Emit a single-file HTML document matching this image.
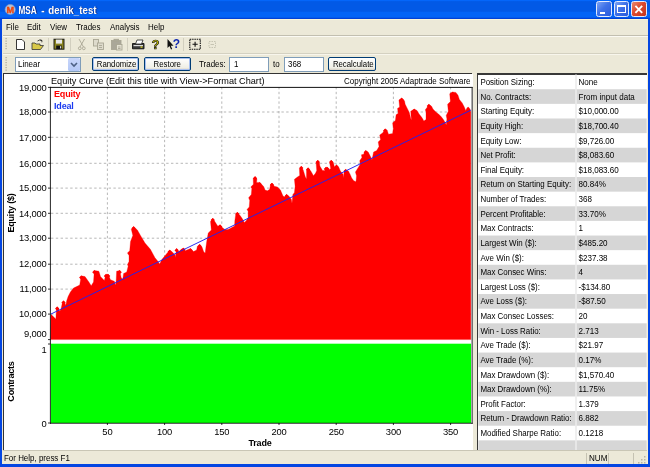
<!DOCTYPE html>
<html><head><meta charset="utf-8"><title>MSA - denik_test</title>
<style>
html,body{margin:0;padding:0;}
body{width:650px;height:467px;overflow:hidden;background:#ece9d8;font-family:"Liberation Sans",sans-serif;font-size:9.5px;color:#000;position:relative;will-change:transform;}
.abs{position:absolute;}
#title{left:0;top:0;width:650px;height:19.3px;background:linear-gradient(to bottom,#0466fa 0,#0466fa 0.8px,#0259e6 1.6px,#0259e6 11.3px,#0364f6 12.2px,#0364f6 17.2px,#0242d6 18.2px,#0242d6 19.3px);}
#title .t{position:absolute;left:18.3px;top:4.2px;color:#fff;font-weight:bold;font-size:10.2px;letter-spacing:-0.6px;word-spacing:2.2px;text-shadow:1px 1px 0 #0a2a8a;white-space:nowrap;}
.wb{position:absolute;top:1.2px;width:15.6px;height:16.3px;border-radius:2.5px;border:1px solid #e4ebfc;box-sizing:border-box;background:linear-gradient(135deg,#7ea4f4 0%,#3f72e8 45%,#2a5bdc 100%);}
#menu{left:2.5px;top:19.3px;width:645.5px;height:16.2px;background:#ece9d8;border-top:0.8px solid #fbf5d8;box-sizing:border-box;}
#menu span{position:absolute;top:2.2px;font-size:9.3px;white-space:nowrap;transform:scaleX(0.855);transform-origin:0 0;}
#tb1{left:2.5px;top:34.9px;width:645px;height:18.8px;background:linear-gradient(#c2bfb0 0,#c2bfb0 0.9px,#fbfaf3 0.9px,#fbfaf3 1.7px,#ece9d8 1.7px);}
#tb2{left:2.5px;top:53.4px;width:645px;height:19.6px;background:linear-gradient(#d4d1c1 0,#d4d1c1 0.9px,#f8f6ec 0.9px,#f8f6ec 1.7px,#ece9d8 1.7px);}
.lb,.rb,.bb{background:#0446e2;}
.btn{position:absolute;top:57px;height:14px;box-sizing:border-box;border:1px solid #003c74;border-radius:2px;background:linear-gradient(#fff,#f0efe6 80%,#d6d0c5);font-size:9.3px;text-align:center;line-height:12px;white-space:nowrap;}
.btn span{display:inline-block;transform:scaleX(0.84);transform-origin:50% 50%;}
.sx{display:inline-block;transform:scaleX(0.855);transform-origin:0 0;white-space:nowrap;}
.inp{position:absolute;top:56.5px;height:15px;box-sizing:border-box;border:1px solid #7f9db9;background:#fff;font-size:9.3px;line-height:13.4px;padding-left:3.6px;}
#chart{left:4.1px;top:74.4px;width:468.5px;height:375.6px;background:#fff;}
#panel{left:477.2px;top:73.2px;width:169.5px;height:376.8px;background:#fff;border-left:1.2px solid #222;border-top:1.4px solid #222;box-sizing:border-box;overflow:hidden;}
.row{position:absolute;left:0;width:170px;height:14.7px;font-size:9px;line-height:17.9px;white-space:nowrap;}
.row .c1{position:absolute;left:2.1px;transform:scaleX(0.877);transform-origin:0 0;}
.row .c2{position:absolute;left:100.0px;transform:scaleX(0.887);transform-origin:0 0;}
#status{left:3px;top:450px;width:644px;height:14px;background:#ece9d8;border-top:1px solid #c9c6b5;box-sizing:border-box;font-size:9.3px;line-height:14.6px;}
svg text{font-family:"Liberation Sans",sans-serif;font-size:9.4px;fill:#000;letter-spacing:-0.18px;}
svg text.pt{font-size:9.7px;letter-spacing:0;}
svg .tt text{font-size:10.6px;font-weight:bold;letter-spacing:0;}
.g{stroke:#9a9a9a;stroke-width:0.7;stroke-dasharray:2.4,2.4;}
</style></head><body>
<div id="title" class="abs"><svg class="abs" style="left:0;top:0" width="120" height="19" viewBox="0 0 120 19"><g class="tt"><g fill="#0a2a8a" transform="translate(0.8,0.8)"><text x="18.500" y="13.500" textLength="18.300" lengthAdjust="spacingAndGlyphs" style="fill:#0a2a8a">MSA</text><text x="41.200" y="13.500" textLength="3.400" lengthAdjust="spacingAndGlyphs" style="fill:#0a2a8a">-</text><text x="48.300" y="13.500" textLength="48.300" lengthAdjust="spacingAndGlyphs" style="fill:#0a2a8a">denik_test</text></g><text x="18.500" y="13.500" textLength="18.300" lengthAdjust="spacingAndGlyphs" style="fill:#fff">MSA</text><text x="41.200" y="13.500" textLength="3.400" lengthAdjust="spacingAndGlyphs" style="fill:#fff">-</text><text x="48.300" y="13.500" textLength="48.300" lengthAdjust="spacingAndGlyphs" style="fill:#fff">denik_test</text></g></svg>
<svg class="abs" style="left:2.8px;top:1.7px" width="16" height="16" viewBox="0 0 16 16"><circle cx="7.200" cy="7.500" r="5.100" fill="#b4c0d8" stroke="#8a9cc4" stroke-width="0.600"/><text x="7.200" y="10.900" text-anchor="middle" textLength="7.600" lengthAdjust="spacingAndGlyphs" style="font-size:8.800px;font-weight:bold;fill:#f04408;stroke:#f04408;stroke-width:0.35;letter-spacing:0">M</text></svg>
<div class="wb" style="left:596.2px"><div class="abs" style="left:2.700px;top:9.400px;width:5.500px;height:2.200px;background:#fff"></div></div>
<div class="wb" style="left:613.700px"><div class="abs" style="left:2.500px;top:3px;width:8.500px;height:8.300px;box-sizing:border-box;border:1.100px solid #fff;border-top:2.300px solid #fff"></div></div>
<div class="wb" style="left:631.300px;background:linear-gradient(135deg,#ea8a70 0%,#dc4a2e 45%,#c4341e 100%);"><svg class="abs" style="left:0;top:0" width="13.6" height="14.3" viewBox="0 0 13.6 14.3"><path d="M3.400 3.800 L10.200 10.800 M10.200 3.800 L3.400 10.800" stroke="#fff" stroke-width="1.9"/></svg></div>
</div>
<div class="abs lb" style="left:0;top:19px;width:2.4px;height:448px"></div>
<div class="abs" style="left:646.7px;top:19.5px;width:1.8px;height:444px;background:#f6f0d8"></div><div class="abs rb" style="left:648.2px;top:19px;width:1.8px;height:448px"></div>
<div class="abs bb" style="left:0;top:464px;width:650px;height:3px"></div>

<div id="menu" class="abs"><span style="left:3px">File</span><span style="left:24.5px">Edit</span><span style="left:47px">View</span><span style="left:73px">Trades</span><span style="left:107px">Analysis</span><span style="left:145px">Help</span></div>
<div id="tb1" class="abs"></div>
<div id="tb2" class="abs"></div>

<!-- toolbar 1 icons -->
<svg class="abs" style="left:0;top:35px" width="260" height="20" viewBox="0 0 260 20">
<g fill="#a8a594"><rect x="5.5" y="3" width="1.2" height="1.2"/><rect x="5.5" y="5.5" width="1.2" height="1.2"/><rect x="5.5" y="8" width="1.2" height="1.2"/><rect x="5.5" y="10.5" width="1.2" height="1.2"/><rect x="5.5" y="13" width="1.2" height="1.2"/></g>
<path d="M16.5 4.5 H22 L24.5 7 V14.5 H16.5 Z" fill="#fff" stroke="#222" stroke-width="0.9"/>
<path d="M32 14.5 V8 H35 L36 9 H40 V10.5 H43.5 L40.5 14.5 Z" fill="#d8c848" stroke="#333" stroke-width="0.8"/>
<path d="M37.5 6 Q40 4 42 5.5 M42 5.5 l-1.8 -0.3 M42 5.500 l-0.2 1.8" stroke="#222" stroke-width="0.8" fill="none"/>
<line x1="48.5" y1="3" x2="48.5" y2="16" stroke="#d2cfbf"/>
<rect x="54" y="4.2" width="10" height="10" fill="#8a8420" stroke="#111" stroke-width="0.9"/>
<rect x="56" y="4.6" width="6" height="4" fill="#e8e8e8"/>
<rect x="56.2" y="10.6" width="5.6" height="3.4" fill="#111"/>
<rect x="60" y="11.200" width="1.200" height="2.200" fill="#ddd"/>
<line x1="70.5" y1="3" x2="70.5" y2="16" stroke="#d2cfbf"/>
<g stroke="#a9a694" fill="none" stroke-width="0.9">
<path d="M79 4 L83.500 12 M84.500 4 L80 12"/><circle cx="79.800" cy="13.300" r="1.400"/><circle cx="83.800" cy="13.300" r="1.400"/>
<rect x="93.500" y="4.500" width="5" height="6.500" fill="#dedbcc"/><rect x="97.500" y="8" width="6" height="6.500" fill="#dedbcc"/><path d="M99 10.500 h3 M99 12.500 h3"/>
<rect x="111.500" y="5.500" width="9.5" height="9" fill="#aaa799"/><rect x="114" y="4.300" width="4.500" height="2" fill="#aaa799"/><rect x="116.500" y="9.500" width="5.500" height="5.500" fill="#e4e1d2"/><path d="M118 12 h2.500 M118 13.500 h2.500"/>
</g>
<line x1="127.500" y1="3" x2="127.500" y2="16" stroke="#d2cfbf"/>
<g><path d="M132.500 8.500 H144 V13.800 H132.500 Z" fill="#3a3a3a" stroke="#111" stroke-width="0.9"/><path d="M135.500 9 L137 5 H143 L141.500 9 Z" fill="#fff" stroke="#222" stroke-width="0.8"/><rect x="133.500" y="10" width="9.500" height="1.200" fill="#ddd"/><rect x="140.500" y="11.500" width="2" height="1.200" fill="#e8e020"/></g>
<text x="155.500" y="14" text-anchor="middle" style="font-size:12.5px;font-weight:bold;fill:#cfc800;stroke:#111;stroke-width:0.7">?</text>
<path d="M167.500 4 V13 L169.500 11 L171 14.500 L172.200 14 L170.800 10.800 H173.500 Z" fill="#111"/>
<text x="176.300" y="13" text-anchor="middle" style="font-size:12px;font-weight:bold;fill:#1028b0">?</text>
<line x1="183.500" y1="3" x2="183.500" y2="16" stroke="#d2cfbf"/>
<rect x="189.800" y="4.300" width="10.500" height="10" fill="none" stroke="#111" stroke-width="1.1" stroke-dasharray="1.500,0.800"/><path d="M192.500 9.300 h5.200 M195.100 6.800 v5" stroke="#111" stroke-width="1.1"/>
<rect x="209" y="6.500" width="6.500" height="6" fill="none" stroke="#bdbaa8" stroke-width="0.8" stroke-dasharray="1.500,1"/><path d="M210.500 9.500 h3.500" stroke="#bdbaa8" stroke-width="0.800"/>
</svg>

<!-- toolbar 2 -->
<svg class="abs" style="left:0;top:54px" width="12" height="20"><g fill="#a8a594"><rect x="5.5" y="3" width="1.200" height="1.200"/><rect x="5.5" y="5.500" width="1.200" height="1.200"/><rect x="5.5" y="8" width="1.200" height="1.200"/><rect x="5.5" y="10.500" width="1.200" height="1.200"/><rect x="5.5" y="13" width="1.200" height="1.200"/><rect x="5.5" y="15.500" width="1.200" height="1.200"/></g></svg>
<div class="inp" style="left:15px;width:66px;padding-left:2.3px"><span class="sx">Linear</span></div>
<div class="abs" style="left:68px;top:58px;width:12px;height:12.500px;background:linear-gradient(#c8d6fb,#b4c8f6);border-radius:1.500px"></div>
<svg class="abs" style="left:68px;top:58px" width="12" height="12.500" viewBox="0 0 12 12.500"><path d="M3 5 L6 8 L9 5" fill="none" stroke="#4d6185" stroke-width="1.600"/></svg>
<div class="btn" style="left:91.500px;width:47.500px;box-shadow:inset 0 0 0 1px #a8c0f0"><span>Randomize</span></div>
<div class="btn" style="left:143.500px;width:47.500px;box-shadow:inset 0 0 0 1px #a8c0f0"><span>Restore</span></div>
<div class="abs sx" style="left:199px;top:59.2px;font-size:9.300px">Trades:</div>
<div class="inp" style="left:229px;width:40px;"><span class="sx">1</span></div>
<div class="abs sx" style="left:273px;top:59.2px;font-size:9.300px">to</div>
<div class="inp" style="left:283.500px;width:40px;"><span class="sx">368</span></div>
<div class="btn" style="left:327.5px;width:48.8px;"><span>Recalculate</span></div>

<div class="abs" style="left:2.7px;top:73px;width:469.8px;height:377px;background:#333"></div>
<div id="chart" class="abs"></div>
<svg class="abs" style="left:0;top:0" width="650" height="467" viewBox="0 0 650 467">
<text x="51" y="84.300" textLength="213.5" lengthAdjust="spacingAndGlyphs" style="font-size:9.200px;letter-spacing:0">Equity Curve (Edit this title with View-&gt;Format Chart)</text>
<text x="344" y="84.300" textLength="126.5" lengthAdjust="spacingAndGlyphs" style="font-size:8.800px;letter-spacing:0">Copyright 2005 Adaptrade Software</text>
<line x1="51" x2="470.8" y1="112.0" y2="112.0" class="g"/>
<line x1="51" x2="470.8" y1="137.3" y2="137.3" class="g"/>
<line x1="51" x2="470.8" y1="163.3" y2="163.3" class="g"/>
<line x1="51" x2="470.8" y1="188.1" y2="188.1" class="g"/>
<line x1="51" x2="470.8" y1="213.3" y2="213.3" class="g"/>
<line x1="51" x2="470.8" y1="238.2" y2="238.2" class="g"/>
<line x1="51" x2="470.8" y1="264.2" y2="264.2" class="g"/>
<line x1="51" x2="470.8" y1="289.1" y2="289.1" class="g"/>
<line x1="51" x2="470.8" y1="314.1" y2="314.1" class="g"/>
<line x1="107.4" x2="107.4" y1="87" y2="340" class="g"/>
<line x1="164.6" x2="164.6" y1="87" y2="340" class="g"/>
<line x1="221.8" x2="221.8" y1="87" y2="340" class="g"/>
<line x1="279.0" x2="279.0" y1="87" y2="340" class="g"/>
<line x1="336.2" x2="336.2" y1="87" y2="340" class="g"/>
<line x1="393.4" x2="393.4" y1="87" y2="340" class="g"/>
<line x1="450.6" x2="450.6" y1="87" y2="340" class="g"/>

<polygon points="50.5,339.6 50.9,314.3 53,316.2 55.8,319 56.3,312 56.2,308.5 57.2,306.8 58.5,308.5 59.8,311.2 61,309 62.3,303 63.5,300.8 64.8,302.5 65.8,305.5 66.6,301 68.1,296.6 70.4,292 73.5,288.1 76.6,286.6 79.7,285 80.5,280 81.2,275.8 85,276.6 88.9,282 91.2,285.8 93.5,282 94,275 94.3,270.4 98.9,271.2 100.5,276.6 104.3,280.4 105.9,274.3 108.2,274.3 110.5,279.7 114.3,281.2 115.9,285 116.3,278 116.6,271.2 119.7,270.4 121.3,278.1 122.8,278.9 123.6,273.5 126.7,272 128.2,266 127.4,264.7 129,261.6 129,255.4 127.4,253.1 129.7,250.8 130.5,241.6 132.8,235.4 131.3,229.2 133.6,226.5 137.4,230 140.5,235.4 145,243.1 150.4,249.3 155,257.8 158.1,261.6 159.7,264 162,259.3 165.8,254.7 169.7,250 172.8,252.4 175,254.7 175.3,257.5 175.8,254 176.6,248.5 178.9,251.6 181.2,249.3 183.5,248 185.1,250.8 190.5,248.5 193.6,251.6 196.6,250 197.4,246.2 199.7,244.4 202,247 203.6,251.6 205.1,253.2 206.7,241.6 208.2,233.1 211.3,230 210.5,221.6 212.8,218.2 215.8,223.1 217.9,226.3 220.1,224.7 222.2,227.4 224.9,229.5 228,229.5 231,228 234.6,226 234.8,220.9 235.7,214.4 237.3,212.3 240.5,216.1 242.7,219.3 244.3,222.5 246,221 248.1,217.7 248.1,211.2 247,209.6 249.2,206.9 249.7,200.5 248.6,197.8 251.3,194.5 251.8,188.6 250.8,187 253.4,184.3 253.2,178.5 255.1,176.5 256.9,179.3 256.6,182.4 259.7,182.4 263.5,186.2 265.1,190.1 267.4,190.8 269.7,189.3 270.5,184.2 272,183.1 274.3,186.2 277.4,187 280.5,190.1 282.8,195.5 284.3,197 286.6,194.4 289,196.2 291.3,199.3 292,203.2 292.8,194.7 294.4,192.4 295.1,186.2 294.4,179.3 297.4,177 299.7,175.4 299.4,168.5 301.3,166.2 303.2,169.9 305.4,176.9 306.5,179.1 306.5,169.9 308.1,167.8 310.8,171 313.5,175.8 315.6,173.1 316.7,170.5 316.1,162.4 317.8,160.2 319.4,162.4 319.9,166.1 322.6,170.5 324.8,170.5 325.8,167.2 327.4,167.2 329.1,169.4 330.7,168.8 329.6,162.4 331.2,160.2 333.4,162.4 334.4,166.7 336.6,165.1 338.8,167.2 340.4,171 342,173.1 343.1,174.2 343.6,178 344.1,170.5 345.7,169.4 348.4,171 350.1,174.2 351.7,178 353.8,180.7 356,181.8 356.5,175.8 355.4,172.1 357,169.4 358.7,166.7 360.3,164 359.7,160.8 361.9,157.5 361.4,154.8 363.5,154.3 365.7,150.5 368.2,152 370.5,156.6 372,159.7 373.6,152 376.7,150.5 379,146.6 378.2,142 380.5,139.7 379.7,135 382.8,132.7 385.1,128.9 387.1,130 388.5,134.2 392.6,133.5 393.3,128.6 392.6,123 395.4,120.2 396.1,114.7 398.2,113.3 397.5,108.4 399.6,107 398.9,100.1 401.7,98 404.5,100.8 405.2,104.3 407.3,108.4 409.3,112.6 410.7,118.2 411.4,120.2 410.7,111.2 414.2,109.1 417,110.5 419.1,114 421.9,117.5 423.9,120.9 426,119.6 426,111.9 425.3,109.8 427.4,107 428.8,104.3 431.6,106.3 433,109.1 435.8,111.9 438.5,114 441.3,116.8 443.4,119.6 445.5,123 446.2,125.1 446.9,118.9 446.2,115.4 448.3,111.2 447.6,104.3 450.4,101.5 449.7,93.8 452.5,92 455.9,92.4 458,95.2 459.4,99.4 462.2,102.9 464.3,107 465.7,110.5 467.1,107.7 468.4,107 470,109.1 470.8,112 470.8,339.6" fill="#ff0000" stroke="#ff0000" stroke-width="0.3" stroke-linejoin="round"/>
<path d="M55.1 308.6 L57.2 306.5 L59.3 308.6 L57.2 310.7 Z M61.4 302.6 L63.5 300.5 L65.6 302.6 L63.5 304.7 Z M79.1 277.6 L81.2 275.5 L83.3 277.6 L81.2 279.7 Z M92.2 272.2 L94.3 270.1 L96.4 272.2 L94.3 274.3 Z M103.8 276.1 L105.9 274.0 L108.0 276.1 L105.9 278.2 Z M106.1 276.1 L108.2 274.0 L110.3 276.1 L108.2 278.2 Z M117.6 272.2 L119.7 270.1 L121.8 272.2 L119.7 274.3 Z M131.5 228.3 L133.6 226.2 L135.7 228.3 L133.6 230.4 Z M167.6 251.8 L169.7 249.7 L171.8 251.8 L169.7 253.9 Z M174.5 250.3 L176.6 248.2 L178.7 250.3 L176.6 252.4 Z M181.4 249.8 L183.5 247.7 L185.6 249.8 L183.5 251.9 Z M188.4 250.3 L190.5 248.2 L192.6 250.3 L190.5 252.4 Z M197.6 246.2 L199.7 244.1 L201.8 246.2 L199.7 248.3 Z M210.7 220.0 L212.8 217.9 L214.9 220.0 L212.8 222.1 Z M218.0 226.5 L220.1 224.4 L222.2 226.5 L220.1 228.6 Z M235.2 214.1 L237.3 212.0 L239.4 214.1 L237.3 216.2 Z M253.0 178.3 L255.1 176.2 L257.2 178.3 L255.1 180.4 Z M257.6 184.2 L259.7 182.1 L261.8 184.2 L259.7 186.3 Z M269.9 184.9 L272.0 182.8 L274.1 184.9 L272.0 187.0 Z M284.5 196.2 L286.6 194.1 L288.7 196.2 L286.6 198.3 Z M299.2 168.0 L301.3 165.9 L303.4 168.0 L301.3 170.1 Z M306.0 169.6 L308.1 167.5 L310.2 169.6 L308.1 171.7 Z M315.7 162.0 L317.8 159.9 L319.9 162.0 L317.8 164.1 Z M323.7 169.0 L325.8 166.9 L327.9 169.0 L325.8 171.1 Z M325.3 169.0 L327.4 166.9 L329.5 169.0 L327.4 171.1 Z M329.1 162.0 L331.2 159.9 L333.3 162.0 L331.2 164.1 Z M334.5 166.9 L336.6 164.8 L338.7 166.9 L336.6 169.0 Z M343.6 171.2 L345.7 169.1 L347.8 171.2 L345.7 173.3 Z M363.6 152.3 L365.7 150.2 L367.8 152.3 L365.7 154.4 Z M383.0 130.7 L385.1 128.6 L387.2 130.7 L385.1 132.8 Z M399.6 99.8 L401.7 97.7 L403.8 99.8 L401.7 101.9 Z M412.1 110.9 L414.2 108.8 L416.3 110.9 L414.2 113.0 Z M426.7 106.1 L428.8 104.0 L430.9 106.1 L428.8 108.2 Z M450.4 93.8 L452.5 91.7 L454.6 93.8 L452.5 95.9 Z " fill="#ff0000"/>
<line x1="51" y1="314.0" x2="470.8" y2="110.2" stroke="#2222ee" stroke-width="0.95"/>
<rect x="51" y="343.700" width="420" height="79.300" fill="#00ff00"/>
<line x1="50.400" y1="86.900" x2="50.400" y2="423.700" stroke="#111" stroke-width="0.92"/>

<line x1="50" y1="87.400" x2="472.700" y2="87.400" stroke="#111" stroke-width="1"/>
<line x1="472.150" y1="87" x2="472.150" y2="423.700" stroke="#333" stroke-width="1.100"/>

<line x1="50" y1="423.250" x2="472.700" y2="423.250" stroke="#111" stroke-width="0.9"/>
<text x="46.5" y="90.9" text-anchor="end">19,000</text>
<line x1="48" x2="50.5" y1="87.4" y2="87.4" stroke="#000" stroke-width="0.8"/>
<text x="46.5" y="115.2" text-anchor="end">18,000</text>
<line x1="48" x2="50.5" y1="112.0" y2="112.0" stroke="#000" stroke-width="0.8"/>
<text x="46.5" y="140.5" text-anchor="end">17,000</text>
<line x1="48" x2="50.5" y1="137.3" y2="137.3" stroke="#000" stroke-width="0.8"/>
<text x="46.5" y="166.5" text-anchor="end">16,000</text>
<line x1="48" x2="50.5" y1="163.3" y2="163.3" stroke="#000" stroke-width="0.8"/>
<text x="46.5" y="191.3" text-anchor="end">15,000</text>
<line x1="48" x2="50.5" y1="188.1" y2="188.1" stroke="#000" stroke-width="0.8"/>
<text x="46.5" y="216.5" text-anchor="end">14,000</text>
<line x1="48" x2="50.5" y1="213.3" y2="213.3" stroke="#000" stroke-width="0.8"/>
<text x="46.5" y="241.3" text-anchor="end">13,000</text>
<line x1="48" x2="50.5" y1="238.2" y2="238.2" stroke="#000" stroke-width="0.8"/>
<text x="46.5" y="267.4" text-anchor="end">12,000</text>
<line x1="48" x2="50.5" y1="264.2" y2="264.2" stroke="#000" stroke-width="0.8"/>
<text x="46.5" y="292.2" text-anchor="end">11,000</text>
<line x1="48" x2="50.5" y1="289.1" y2="289.1" stroke="#000" stroke-width="0.8"/>
<text x="46.5" y="317.3" text-anchor="end">10,000</text>
<line x1="48" x2="50.5" y1="314.1" y2="314.1" stroke="#000" stroke-width="0.8"/>
<text x="46.5" y="336.7" text-anchor="end">9,000</text>
<line x1="48" x2="50.5" y1="339.6" y2="339.6" stroke="#000" stroke-width="0.8"/>

<text x="107.4" y="435" text-anchor="middle">50</text>
<line x1="107.4" x2="107.4" y1="423" y2="425" stroke="#000" stroke-width="0.8"/>
<text x="164.6" y="435" text-anchor="middle">100</text>
<line x1="164.6" x2="164.6" y1="423" y2="425" stroke="#000" stroke-width="0.8"/>
<text x="221.8" y="435" text-anchor="middle">150</text>
<line x1="221.8" x2="221.8" y1="423" y2="425" stroke="#000" stroke-width="0.8"/>
<text x="279.0" y="435" text-anchor="middle">200</text>
<line x1="279.0" x2="279.0" y1="423" y2="425" stroke="#000" stroke-width="0.8"/>
<text x="336.2" y="435" text-anchor="middle">250</text>
<line x1="336.2" x2="336.2" y1="423" y2="425" stroke="#000" stroke-width="0.8"/>
<text x="393.4" y="435" text-anchor="middle">300</text>
<line x1="393.4" x2="393.4" y1="423" y2="425" stroke="#000" stroke-width="0.8"/>
<text x="450.6" y="435" text-anchor="middle">350</text>
<line x1="450.6" x2="450.6" y1="423" y2="425" stroke="#000" stroke-width="0.8"/>

<text x="46.500" y="352.500" text-anchor="end">1</text>
<text x="46.500" y="427" text-anchor="end">0</text>
<line x1="48" x2="50.500" y1="344" y2="344" stroke="#000" stroke-width="0.800"/>
<line x1="48" x2="50.500" y1="423" y2="423" stroke="#000" stroke-width="0.800"/>
<text x="54" y="97" style="font-weight:bold;fill:#ff0000;font-size:9px">Equity</text>
<text x="54" y="109" style="font-weight:bold;fill:#1a3af0;font-size:9px">Ideal</text>
<text transform="translate(14,213) rotate(-90)" text-anchor="middle" style="font-weight:bold;font-size:9px">Equity ($)</text>
<text transform="translate(14,381.5) rotate(-90)" text-anchor="middle" style="font-weight:bold;font-size:9px">Contracts</text>
<text x="260" y="446" text-anchor="middle" style="font-weight:bold;font-size:9px">Trade</text>
</svg>

<div class="abs" style="left:476.5px;top:73px;width:170.2px;height:377px;background:#383838"></div>
<div class="abs" style="left:477.8px;top:74.5px;width:168.9px;height:375.5px;background:#fff"></div>
<svg class="abs" style="left:0;top:0" width="650" height="467" viewBox="0 0 650 467">
<text class="pt" transform="translate(480.4,85.00) scale(0.818,1)">Position Sizing:</text><text class="pt" transform="translate(578.5,85.00) scale(0.83,1)">None</text>
<rect x="478.4" y="89.23" width="168.3" height="14.63" fill="#d6d6d6"/>
<text class="pt" transform="translate(480.4,99.63) scale(0.818,1)">No. Contracts:</text><text class="pt" transform="translate(578.5,99.63) scale(0.83,1)">From input data</text>
<text class="pt" transform="translate(480.4,114.26) scale(0.818,1)">Starting Equity:</text><text class="pt" transform="translate(578.5,114.26) scale(0.83,1)">$10,000.00</text>
<rect x="478.4" y="118.49" width="168.3" height="14.63" fill="#d6d6d6"/>
<text class="pt" transform="translate(480.4,128.89) scale(0.818,1)">Equity High:</text><text class="pt" transform="translate(578.5,128.89) scale(0.83,1)">$18,700.40</text>
<text class="pt" transform="translate(480.4,143.52) scale(0.818,1)">Equity Low:</text><text class="pt" transform="translate(578.5,143.52) scale(0.83,1)">$9,726.00</text>
<rect x="478.4" y="147.75" width="168.3" height="14.63" fill="#d6d6d6"/>
<text class="pt" transform="translate(480.4,158.15) scale(0.818,1)">Net Profit:</text><text class="pt" transform="translate(578.5,158.15) scale(0.83,1)">$8,083.60</text>
<text class="pt" transform="translate(480.4,172.78) scale(0.818,1)">Final Equity:</text><text class="pt" transform="translate(578.5,172.78) scale(0.83,1)">$18,083.60</text>
<rect x="478.4" y="177.01" width="168.3" height="14.63" fill="#d6d6d6"/>
<text class="pt" transform="translate(480.4,187.41) scale(0.818,1)">Return on Starting Equity:</text><text class="pt" transform="translate(578.5,187.41) scale(0.83,1)">80.84%</text>
<text class="pt" transform="translate(480.4,202.04) scale(0.818,1)">Number of Trades:</text><text class="pt" transform="translate(578.5,202.04) scale(0.83,1)">368</text>
<rect x="478.4" y="206.27" width="168.3" height="14.63" fill="#d6d6d6"/>
<text class="pt" transform="translate(480.4,216.67) scale(0.818,1)">Percent Profitable:</text><text class="pt" transform="translate(578.5,216.67) scale(0.83,1)">33.70%</text>
<text class="pt" transform="translate(480.4,231.30) scale(0.818,1)">Max Contracts:</text><text class="pt" transform="translate(578.5,231.30) scale(0.83,1)">1</text>
<rect x="478.4" y="235.53" width="168.3" height="14.63" fill="#d6d6d6"/>
<text class="pt" transform="translate(480.4,245.93) scale(0.818,1)">Largest Win ($):</text><text class="pt" transform="translate(578.5,245.93) scale(0.83,1)">$485.20</text>
<text class="pt" transform="translate(480.4,260.56) scale(0.818,1)">Ave Win ($):</text><text class="pt" transform="translate(578.5,260.56) scale(0.83,1)">$237.38</text>
<rect x="478.4" y="264.79" width="168.3" height="14.63" fill="#d6d6d6"/>
<text class="pt" transform="translate(480.4,275.19) scale(0.818,1)">Max Consec Wins:</text><text class="pt" transform="translate(578.5,275.19) scale(0.83,1)">4</text>
<text class="pt" transform="translate(480.4,289.82) scale(0.818,1)">Largest Loss ($):</text><text class="pt" transform="translate(578.5,289.82) scale(0.83,1)">-$134.80</text>
<rect x="478.4" y="294.05" width="168.3" height="14.63" fill="#d6d6d6"/>
<text class="pt" transform="translate(480.4,304.45) scale(0.818,1)">Ave Loss ($):</text><text class="pt" transform="translate(578.5,304.45) scale(0.83,1)">-$87.50</text>
<text class="pt" transform="translate(480.4,319.08) scale(0.818,1)">Max Consec Losses:</text><text class="pt" transform="translate(578.5,319.08) scale(0.83,1)">20</text>
<rect x="478.4" y="323.31" width="168.3" height="14.63" fill="#d6d6d6"/>
<text class="pt" transform="translate(480.4,333.71) scale(0.818,1)">Win - Loss Ratio:</text><text class="pt" transform="translate(578.5,333.71) scale(0.83,1)">2.713</text>
<text class="pt" transform="translate(480.4,348.34) scale(0.818,1)">Ave Trade ($):</text><text class="pt" transform="translate(578.5,348.34) scale(0.83,1)">$21.97</text>
<rect x="478.4" y="352.57" width="168.3" height="14.63" fill="#d6d6d6"/>
<text class="pt" transform="translate(480.4,362.97) scale(0.818,1)">Ave Trade (%):</text><text class="pt" transform="translate(578.5,362.97) scale(0.83,1)">0.17%</text>
<text class="pt" transform="translate(480.4,377.60) scale(0.818,1)">Max Drawdown ($):</text><text class="pt" transform="translate(578.5,377.60) scale(0.83,1)">$1,570.40</text>
<rect x="478.4" y="381.83" width="168.3" height="14.63" fill="#d6d6d6"/>
<text class="pt" transform="translate(480.4,392.23) scale(0.818,1)">Max Drawdown (%):</text><text class="pt" transform="translate(578.5,392.23) scale(0.83,1)">11.75%</text>
<text class="pt" transform="translate(480.4,406.86) scale(0.818,1)">Profit Factor:</text><text class="pt" transform="translate(578.5,406.86) scale(0.83,1)">1.379</text>
<rect x="478.4" y="411.09" width="168.3" height="14.63" fill="#d6d6d6"/>
<text class="pt" transform="translate(480.4,421.49) scale(0.818,1)">Return - Drawdown Ratio:</text><text class="pt" transform="translate(578.5,421.49) scale(0.83,1)">6.882</text>
<text class="pt" transform="translate(480.4,436.12) scale(0.818,1)">Modified Sharpe Ratio:</text><text class="pt" transform="translate(578.5,436.12) scale(0.83,1)">0.1218</text>
<rect x="478.4" y="440.35" width="168.3" height="9.65" fill="#d6d6d6"/>

<rect x="575.2" y="74.5" width="1.6" height="375.5" fill="#ececec"/>
</svg>
<div id="status" class="abs"><span class="abs sx" style="left:0.8px;top:0;transform:scaleX(0.855)">For Help, press F1</span>
<div class="abs" style="left:583px;top:2px;width:1px;height:11px;background:#c5c2b2"></div>
<span class="abs" style="left:586px;top:0;transform:scaleX(0.87);transform-origin:0 0">NUM</span>
<div class="abs" style="left:605px;top:2px;width:1px;height:11px;background:#c5c2b2"></div>
<div class="abs" style="left:630px;top:2px;width:1px;height:11px;background:#c5c2b2"></div>
<svg class="abs" style="left:633px;top:2.5px" width="11" height="11"><g fill="#b8b5a4"><rect x="8" y="2" width="1.500" height="1.500"/><rect x="5" y="5" width="1.500" height="1.500"/><rect x="8" y="5" width="1.500" height="1.500"/><rect x="2" y="8" width="1.500" height="1.500"/><rect x="5" y="8" width="1.500" height="1.500"/><rect x="8" y="8" width="1.500" height="1.500"/></g></svg>
</div>
</body></html>
